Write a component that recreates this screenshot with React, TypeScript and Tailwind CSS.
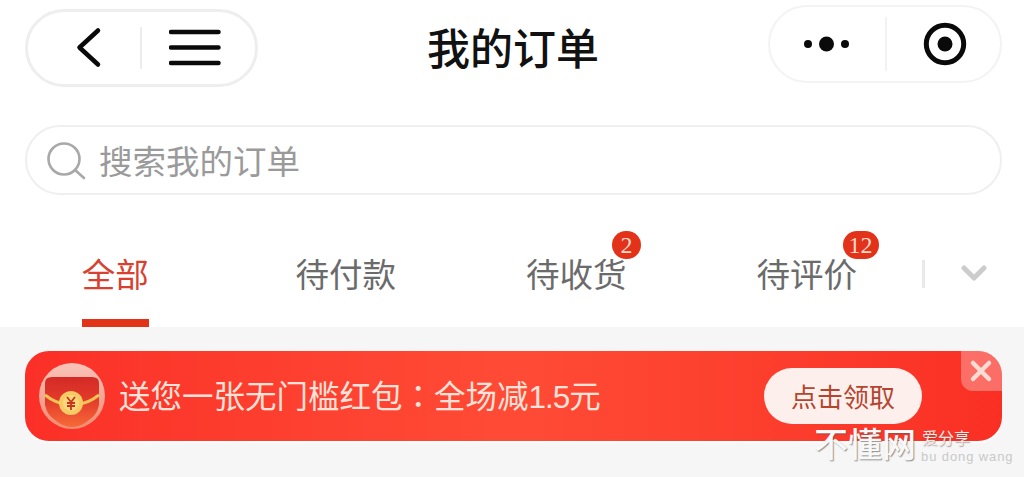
const cjk = "font-['Noto_Sans_CJK_SC','Noto_Sans',sans-serif]";

function Tab({ label, active, badge, badgeClass }: { label: string; active?: boolean; badge?: string; badgeClass?: string }) {
  return (
    <div className="relative flex h-full w-[230.5px] flex-col items-center">
      <div className="relative mt-[53px] h-[50px]">
        <span className={`block text-[33.5px] leading-[50px] ${active ? "text-[#d8412f]" : "text-[#6b6b6b]"}`}>{label}</span>
        {badge && (
          <span className={`absolute top-[-17px] flex h-[28px] items-center justify-center rounded-full bg-[#e2321a] font-['Liberation_Serif',serif] text-[24px] leading-none text-[#fbd9c8] ${badgeClass}`}>
            {badge}
          </span>
        )}
      </div>
      {active && <div className="mt-[21px] h-[8px] w-[67px] bg-[#e2321a]" />}
    </div>
  );
}

function RedPacket() {
  return (
    <svg width="66" height="66" viewBox="0 0 66 66" className="shrink-0">
      <defs>
        <linearGradient id="rp" x1="0" y1="0" x2="0" y2="1">
          <stop offset="0" stopColor="#d42a26" />
          <stop offset="0.45" stopColor="#e23a2a" />
          <stop offset="1" stopColor="#f66a38" />
        </linearGradient>
        <linearGradient id="rim" x1="0" y1="0" x2="0" y2="1">
          <stop offset="0" stopColor="#f9c4ba" />
          <stop offset="1" stopColor="#f28a70" />
        </linearGradient>
      </defs>
      <circle cx="33" cy="33" r="33" fill="url(#rim)" />
      <path d="M6 20 Q6 14 13 14 H53 Q60 14 60 20 V42 Q58 52 50 57 Q42 64 33 64 Q24 64 16 57 Q8 52 6 42 Z" fill="url(#rp)" />
      <path d="M6 32 Q20 43 33 41 Q46 43 60 32" fill="none" stroke="#f2c255" strokeWidth="3" />
      <circle cx="32" cy="40" r="12" fill="#f7cb63" />
      <circle cx="32" cy="40" r="8" fill="#fbd77c" />
      <path d="M28 34 L32 39 L36 34 M32 39 V47 M28 40 H36 M28 43 H36" fill="none" stroke="#c8341d" strokeWidth="1.8" />
    </svg>
  );
}

export default function App() {
  return (
    <div className={`flex h-[477px] w-[1024px] flex-col overflow-hidden bg-[#f6f6f6] ${cjk}`}>
      <div className="flex h-[327px] flex-col bg-white">
        <header className="relative flex h-[125px] items-start justify-between pl-[25px] pr-[22px]">
          <div className="mt-[9px] flex h-[78px] w-[233px] items-center rounded-full border-[3px] border-[#eeeeee] pl-[47px]">
            <svg width="30" height="42" viewBox="0 0 30 42" fill="none" stroke="#0a0a0a" strokeWidth="4.5" strokeLinecap="round" strokeLinejoin="round">
              <path d="M23 3.5 L4.5 20.5 L23 37.5" />
            </svg>
            <div className="ml-[35px] h-[42px] w-[2px] bg-[#ececec]" />
            <svg className="ml-[27px]" width="52" height="38" viewBox="0 0 52 38" stroke="#0a0a0a" strokeWidth="4.5" strokeLinecap="round">
              <path d="M2 3 H49.5 M2 18.5 H49.5 M2 34 H49.5" />
            </svg>
          </div>
          <h1 className="absolute left-[427px] top-[20px] text-[43px] font-medium leading-[52px] text-[#111]">我的订单</h1>
          <div className="mt-[5px] flex h-[78px] w-[234px] items-center rounded-full border-[2px] border-[#f3f3f3] pl-[30px]">
            <svg width="54" height="16" viewBox="0 0 54 16" fill="#0a0a0a">
              <circle cx="8" cy="8" r="4" />
              <circle cx="26.5" cy="8" r="7.5" />
              <circle cx="45" cy="8" r="4" />
            </svg>
            <div className="ml-[31px] h-[54px] w-[2px] bg-[#f2f2f2]" />
            <svg className="ml-[36px]" width="44" height="44" viewBox="0 0 44 44">
              <circle cx="22" cy="22" r="18.7" fill="none" stroke="#0a0a0a" strokeWidth="5" />
              <circle cx="22" cy="22" r="7.5" fill="#0a0a0a" />
            </svg>
          </div>
        </header>

        <div className="ml-[25px] flex h-[70px] w-[977px] items-center rounded-full border-[2px] border-[#efefef] pl-[20px]">
          <svg width="40" height="40" viewBox="0 0 40 40" fill="none" stroke="#a8a8a8" strokeWidth="2.6" strokeLinecap="round">
            <circle cx="17" cy="19" r="15.5" />
            <path d="M28 30 L37 38" />
          </svg>
          <span className="ml-[12px] text-[33.5px] leading-none text-[#9a9a9a]">搜索我的订单</span>
        </div>

        <nav className="flex h-[132px] items-start">
          <Tab label="全部" active />
          <Tab label="待付款" />
          <Tab label="待收货" badge="2" badgeClass="left-[86px] w-[29px]" />
          <Tab label="待评价" badge="12" badgeClass="left-[86px] w-[36px]" />
          <div className="mt-[65px] h-[28px] w-[3px] bg-[#e9e9e9]" />
          <svg className="ml-[36px] mt-[70px]" width="26" height="18" viewBox="0 0 26 18" fill="none" stroke="#cccccc" strokeWidth="5" strokeLinecap="round" strokeLinejoin="round">
            <path d="M3 3 L13 13 L23 3" />
          </svg>
        </nav>
      </div>

      <div className="relative ml-[25px] mt-[24px] flex h-[90px] w-[977px] items-center overflow-hidden rounded-[24px] bg-gradient-to-r from-[#fb2f27] via-[#ff4b36] to-[#fa2f24] pl-[14px] shadow-[0_2px_2px_rgba(255,255,255,0.9)]">
        <RedPacket />
        <span className="ml-[14px] text-[31.5px] leading-none text-[#fde2da]">
          送您一张无门槛红包<span className="font-['Noto_Sans_CJK_TC',sans-serif]">：</span>全场减<span className="font-['Liberation_Sans',sans-serif] tracking-[-1px]">1.5</span>元
        </span>
        <div className="absolute left-[739px] top-[17px] flex h-[56px] w-[158px] items-center justify-center rounded-full bg-[#fdf0ec] text-[26px] leading-none text-[#b4452f]">
          点击领取
        </div>
        <div className="absolute right-0 top-0 flex h-[40px] w-[41px] items-center justify-center rounded-bl-[12px] bg-white/30 pr-[2px]">
          <svg width="24" height="24" viewBox="0 0 24 24" stroke="#fbdcd5" strokeWidth="4.5" strokeLinecap="round">
            <path d="M4 4 L20 20 M20 4 L4 20" />
          </svg>
        </div>
      </div>

      <div className="absolute left-[814px] top-[420px] text-[34px] font-medium leading-[46px] text-[#f8f8f8] [text-shadow:1px_1px_1px_rgba(90,90,90,0.65)]">
        不懂网
      </div>
      <div className="absolute left-[922px] top-[428px] text-[16px] leading-[18px] text-[#fbe6e0] [text-shadow:1px_1px_1px_rgba(90,90,90,0.5)]">
        爱分享
      </div>
      <div className="absolute left-[921px] top-[449px] font-['Liberation_Sans',sans-serif] text-[13px] leading-[16px] tracking-[0.9px] text-[#c9c9c9]">
        bu dong wang
      </div>
    </div>
  );
}
